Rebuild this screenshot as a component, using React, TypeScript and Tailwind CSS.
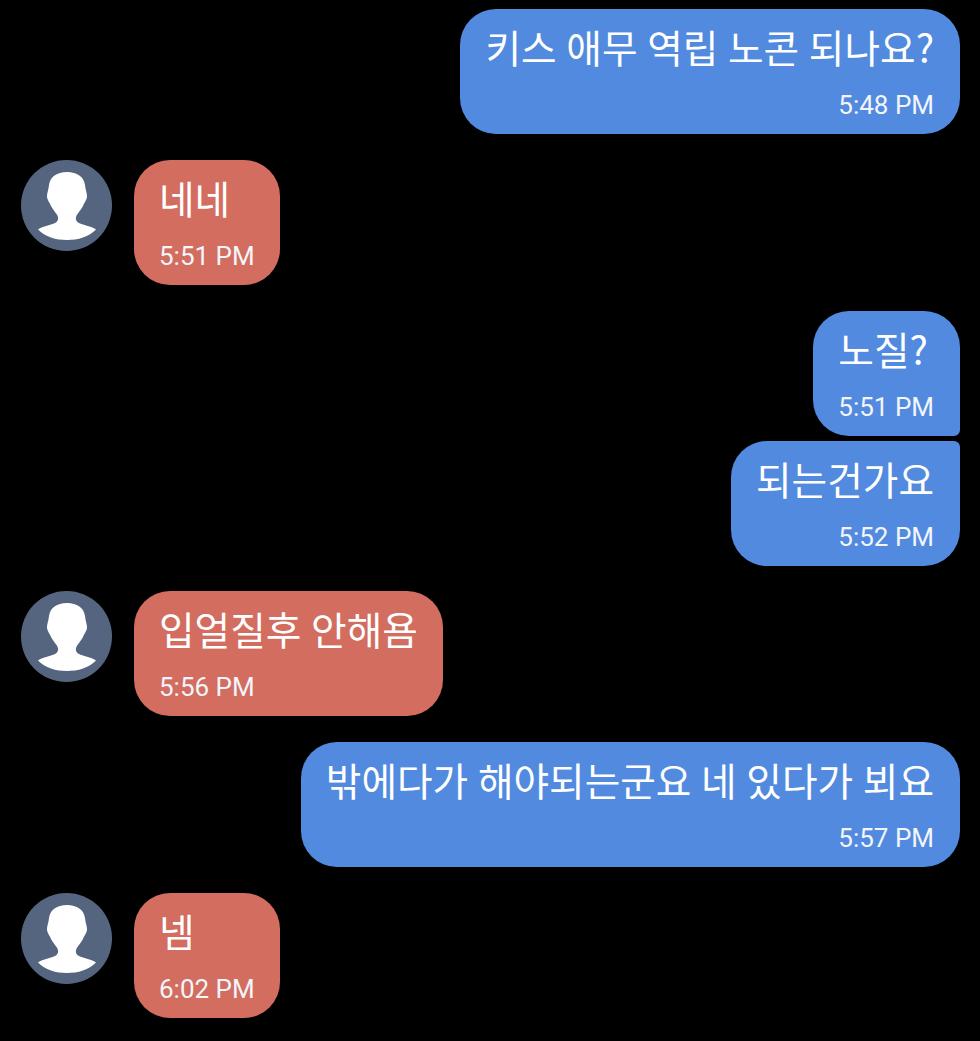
const font = { fontFamily: '"Noto Sans CJK KR", "Noto Sans", sans-serif' };

const Avatar = () => (
  <div className="w-[91px] h-[91px] rounded-full bg-[#56657f] shrink-0 overflow-hidden">
    <svg viewBox="0 0 91 91" className="w-full h-full">
      <path
        d="M46 12C36 12 29 17 28 25C27.500 30 26 33 26 36C26 40 28.500 42 30 46C31.500 49 33.500 51 35.500 54C37.500 57 38 60 35 62.500C30 65.500 22 66 17 69.500C24 77 35 80 46 80C57 80 68 77 75 69.500C70 66 62 65.500 57 62.500C54 60 54.500 57 56.500 54C58.500 51 60.500 49 62 46C63.500 42 66 40 66 36C66 33 64.500 30 64 25C63 17 56 12 46 12Z"
        fill="#ffffff"
      />
    </svg>
  </div>
);

const Bubble = ({ text, time, tail, color, left }: { text: string; time: string; tail?: string; color: string; left?: boolean }) => (
  <div className={`h-[125px] rounded-[36px] flex flex-col text-white ${left ? "px-[25px]" : "pl-[25px] pr-[26px]"} ${color} ${tail ?? ""}`}>
    <p className="mt-[6px] text-[38.7px] leading-[62px] whitespace-nowrap [word-spacing:1px]">{text}</p>
    <p className={`mt-[11px] text-[26px] leading-[34px] font-['Roboto'] text-[#f3f5fa] ${left ? "text-left" : "text-right"}`}>{time}</p>
  </div>
);

const Mine = ({ text, time, tail, className }: { text: string; time: string; tail?: string; className?: string }) => (
  <div className={`flex justify-end pr-5 ${className ?? ""}`}>
    <Bubble text={text} time={time} tail={tail} color="bg-[#518ade]" />
  </div>
);

const Theirs = ({ text, time, className }: { text: string; time: string; className?: string }) => (
  <div className={`flex pl-[21px] gap-[22px] ${className ?? ""}`}>
    <Avatar />
    <Bubble text={text} time={time} color="bg-[#d26d60]" left />
  </div>
);

export default function App() {
  return (
    <div className="w-[980px] h-[1041px] bg-black overflow-hidden pt-[9px]" style={font}>
      <Mine text="키스 애무 역립 노콘 되나요?" time="5:48 PM" />
      <Theirs text="네네" time="5:51 PM" className="mt-[26px]" />
      <Mine text="노질?" time="5:51 PM" tail="rounded-br-[6px]" className="mt-[26px]" />
      <Mine text="되는건가요" time="5:52 PM" tail="rounded-tr-[6px]" className="mt-[5px]" />
      <Theirs text="입얼질후 안해욤" time="5:56 PM" className="mt-[25px]" />
      <Mine text="밖에다가 해야되는군요 네 있다가 뵈요" time="5:57 PM" className="mt-[26px]" />
      <Theirs text="넴" time="6:02 PM" className="mt-[26px]" />
    </div>
  );
}
